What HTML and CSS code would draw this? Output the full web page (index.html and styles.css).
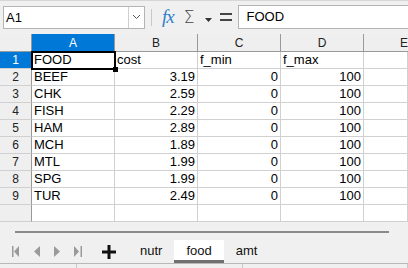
FILE: index.html
```html
<!DOCTYPE html>
<html>
<head>
	<title>food - Calc</title>
	<link rel="stylesheet" href="styles.css">
</head>
<body>
	<div class="toolbar">
		<div class="namebox">
			<span class="namebox-text">A1</span>
			<span class="namebox-btn">
				<svg width="9" height="6" viewBox="0 0 9 6"><path d="M1 1 L4.5 4.5 L8 1" fill="none" stroke="#555" stroke-width="1"/></svg>
			</span>
		</div>
		<div class="sep"></div>
		<span class="fx">fx</span>
		<span class="sigma">&Sigma;</span>
		<span class="drop">
			<svg width="7" height="4" viewBox="0 0 7 4"><path d="M0 0 H7 L3.5 4 Z" fill="#333"/></svg>
		</span>
		<span class="equal">
			<svg width="12" height="9" viewBox="0 0 12 9"><rect x="0" y="0" width="12" height="2" fill="#444"/><rect x="0" y="6" width="12" height="2" fill="#444"/></svg>
		</span>
		<div class="formula">FOOD</div>
	</div>

	<div class="sheet">
		<div class="grid">
			<div class="corner"></div>
			<div class="colhead active">A</div>
			<div class="colhead">B</div>
			<div class="colhead">C</div>
			<div class="colhead">D</div>
			<div class="colhead last">E</div>

			<div class="rowhead active">1</div>
			<div class="cell cursor">FOOD</div>
			<div class="cell">cost</div>
			<div class="cell">f_min</div>
			<div class="cell">f_max</div>
			<div class="cell"></div>

			<div class="rowhead">2</div>
			<div class="cell">BEEF</div>
			<div class="cell num">3.19</div>
			<div class="cell num">0</div>
			<div class="cell num">100</div>
			<div class="cell"></div>

			<div class="rowhead">3</div>
			<div class="cell">CHK</div>
			<div class="cell num">2.59</div>
			<div class="cell num">0</div>
			<div class="cell num">100</div>
			<div class="cell"></div>

			<div class="rowhead">4</div>
			<div class="cell">FISH</div>
			<div class="cell num">2.29</div>
			<div class="cell num">0</div>
			<div class="cell num">100</div>
			<div class="cell"></div>

			<div class="rowhead">5</div>
			<div class="cell">HAM</div>
			<div class="cell num">2.89</div>
			<div class="cell num">0</div>
			<div class="cell num">100</div>
			<div class="cell"></div>

			<div class="rowhead">6</div>
			<div class="cell">MCH</div>
			<div class="cell num">1.89</div>
			<div class="cell num">0</div>
			<div class="cell num">100</div>
			<div class="cell"></div>

			<div class="rowhead">7</div>
			<div class="cell">MTL</div>
			<div class="cell num">1.99</div>
			<div class="cell num">0</div>
			<div class="cell num">100</div>
			<div class="cell"></div>

			<div class="rowhead">8</div>
			<div class="cell">SPG</div>
			<div class="cell num">1.99</div>
			<div class="cell num">0</div>
			<div class="cell num">100</div>
			<div class="cell"></div>

			<div class="rowhead">9</div>
			<div class="cell">TUR</div>
			<div class="cell num">2.49</div>
			<div class="cell num">0</div>
			<div class="cell num">100</div>
			<div class="cell"></div>

			<div class="rowhead"></div>
			<div class="cell"></div>
			<div class="cell"></div>
			<div class="cell"></div>
			<div class="cell"></div>
			<div class="cell"></div>
		</div>
	</div>

	<div class="hscroll"><div class="hscroll-bar"></div></div>

	<div class="tabbar">
		<div class="nav">
			<svg width="8" height="11" viewBox="0 0 8 11"><rect x="0" y="0" width="1.5" height="11" fill="#9a9a9a"/><path d="M7 0 V11 L2 5.5 Z" fill="#9a9a9a"/></svg>
			<svg width="6" height="11" viewBox="0 0 6 11"><path d="M6 0 V11 L0 5.5 Z" fill="#9a9a9a"/></svg>
			<svg width="6" height="11" viewBox="0 0 6 11"><path d="M0 0 V11 L6 5.5 Z" fill="#9a9a9a"/></svg>
			<svg width="8" height="11" viewBox="0 0 8 11"><path d="M0 0 V11 L5 5.5 Z" fill="#9a9a9a"/><rect x="6.5" y="0" width="1.5" height="11" fill="#9a9a9a"/></svg>
		</div>
		<span class="add">
			<svg width="14" height="14" viewBox="0 0 14 14"><rect x="5.5" y="0" width="3" height="14" fill="#111"/><rect x="0" y="5.5" width="14" height="3" fill="#111"/></svg>
		</span>
		<span class="tab first">nutr</span>
		<span class="tab current">food</span>
		<span class="tab">amt</span>
	</div>

	<div class="status">
		<div class="status-part first"></div>
		<div class="status-part"></div>
		<div class="status-part"></div>
	</div>
</body>
</html>
```

FILE: styles.css
```css
/* General styles */
body {
	margin: 0;
	padding: 0;
	width: 408px;
	height: 268px;
	overflow: hidden;
	background-color: #f0f0f0;
	font-family: "Liberation Sans", Arial, sans-serif;
	color: #000;
}

/* Formula toolbar */
.toolbar {
	height: 34px;
	border-top: 1px solid #d6d6d6;
	display: flex;
	align-items: center;
	box-sizing: border-box;
	padding-left: 3px;
	padding-bottom: 1px;
}

.namebox {
	width: 142px;
	height: 23px;
	box-sizing: border-box;
	border: 1px solid #b4b4b4;
	background-color: #fff;
	display: flex;
	align-items: center;
}

.namebox-text {
	flex: 1;
	font-size: 13px;
	padding-left: 2px;
}

.namebox-btn {
	width: 15px;
	height: 21px;
	border-left: 1px solid #cfcfcf;
	display: flex;
	align-items: center;
	justify-content: center;
}

.sep {
	width: 1px;
	height: 17px;
	background-color: #c8c8c8;
	margin-left: 6px;
}

.fx {
	font-family: "Liberation Serif", serif;
	font-style: italic;
	font-size: 19px;
	color: #2f7fc8;
	margin-left: 10px;
	letter-spacing: -1px;
}

.sigma {
	font-family: "DejaVu Sans", sans-serif;
	font-size: 17px;
	color: #444;
	margin-left: 10px;
	font-weight: 300;
}

.drop {
	display: flex;
	margin-left: 11px;
	margin-top: 5px;
}

.equal {
	display: flex;
	margin-left: 8px;
}

.formula {
	flex: 1;
	height: 24px;
	box-sizing: border-box;
	margin-left: 6px;
	border: 1px solid #b4b4b4;
	border-right: none;
	background-color: #fff;
	font-size: 13px;
	line-height: 22px;
	padding-left: 7px;
}

/* Sheet grid */
.sheet {
	height: 189px;
	overflow: hidden;
}

.grid {
	display: grid;
	grid-template-columns: 32px 83px 83px 83px 83px 1fr;
	grid-template-rows: 18px repeat(10, 17px);
	background-color: #fff;
}

.corner, .colhead, .rowhead {
	background-color: #efefef;
	box-sizing: border-box;
	font-size: 12px;
	color: #222;
	display: flex;
	align-items: center;
	justify-content: center;
}

.corner {
	border-right: 1px solid #999;
	border-bottom: 1px solid #999;
}

.colhead {
	border-right: 1px solid #999;
	border-bottom: 1px solid #999;
	padding-top: 1px;
}

.colhead.last {
	justify-content: flex-end;
	border-right: none;
}

.rowhead {
	border-right: 1px solid #999;
	border-bottom: 1px solid #d0d0d0;
}

.colhead.active, .rowhead.active {
	background-color: #0078d7;
	color: #fff;
}

.cell {
	box-sizing: border-box;
	border-right: 1px solid #d0d0d0;
	border-bottom: 1px solid #d0d0d0;
	font-size: 13px;
	line-height: 16px;
	padding: 0 2px;
	white-space: nowrap;
	overflow: hidden;
	display: flex;
	align-items: center;
}

.cell.num {
	justify-content: flex-end;
}

.cell.cursor {
	position: relative;
	overflow: visible;
	outline: 2px solid #000;
	outline-offset: -1px;
	z-index: 1;
}

.cell.cursor::after {
	content: "";
	position: absolute;
	right: -4px;
	bottom: -4px;
	width: 5px;
	height: 5px;
	background-color: #000;
}

/* Horizontal scrollbar */
.hscroll {
	height: 17px;
	display: flex;
	align-items: center;
	padding-left: 15px;
	padding-right: 19px;
}

.hscroll-bar {
	flex: 1;
	height: 2px;
	background-color: #8a8a8a;
}

/* Sheet tabs */
.tabbar {
	height: 23px;
	display: flex;
	align-items: center;
	border-bottom: 1px solid #b8b8b8;
	font-size: 13px;
	padding-left: 12px;
}

.nav {
	display: flex;
	gap: 14px;
	align-items: center;
	width: 80px;
}

.add {
	display: flex;
	margin-left: 10px;
}

.tab {
	height: 23px;
	box-sizing: border-box;
	line-height: 22px;
	padding: 0 12px;
	color: #111;
}

.tab.first {
	margin-left: 12px;
}

.tab.current {
	background-color: #fff;
	border-bottom: 3px solid #707070;
}

/* Status bar */
.status {
	display: flex;
	height: 5px;
}

.status-part {
	width: 218px;
	border-right: 1px solid #c8c8c8;
}

.status-part.first {
	width: 101px;
}
```
